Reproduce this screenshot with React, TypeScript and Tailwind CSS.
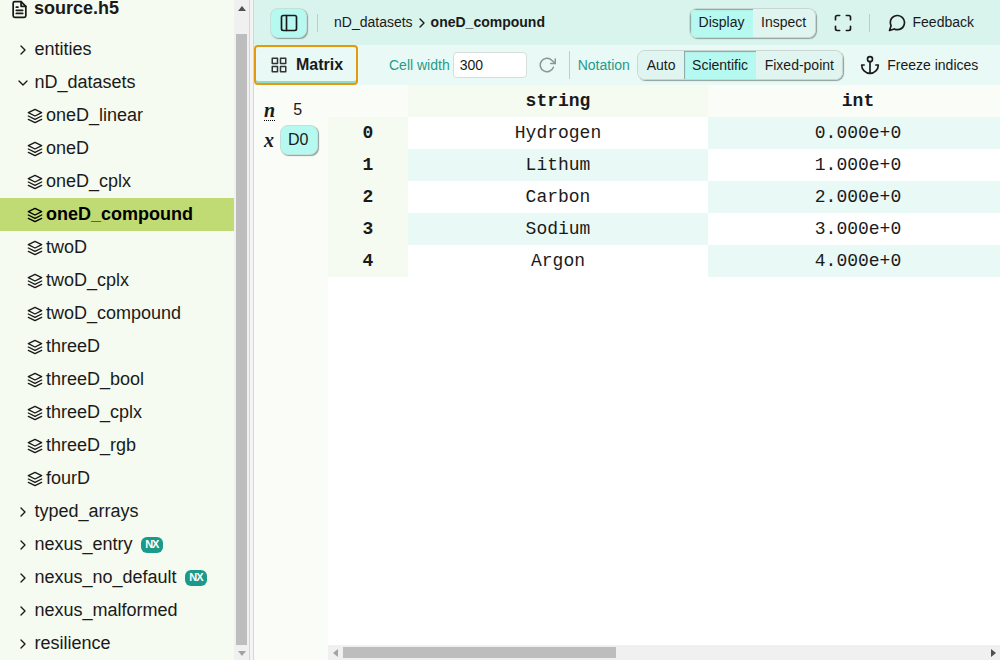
import { FiAnchor, FiChevronDown, FiChevronRight, FiFileText, FiGrid, FiLayers, FiMaximize, FiMessageCircle, FiRotateCw, FiSidebar } from "react-icons/fi";

const topGroups = ["typed_arrays", "nexus_entry", "nexus_no_default", "nexus_malformed", "resilience"];
const nxGroups = ["nexus_entry", "nexus_no_default"];
const datasets = ["oneD_linear", "oneD", "oneD_cplx", "oneD_compound", "twoD", "twoD_cplx", "twoD_compound", "threeD", "threeD_bool", "threeD_cplx", "threeD_rgb", "fourD"];
const rows = [
  { name: "Hydrogen", value: "0.000e+0" },
  { name: "Lithum", value: "1.000e+0" },
  { name: "Carbon", value: "2.000e+0" },
  { name: "Sodium", value: "3.000e+0" },
  { name: "Argon", value: "4.000e+0" },
];

const Arrow = ({ dir, className }: { dir: "up" | "down" | "left" | "right"; className: string }) => {
  const points = { up: "4,1 8,6 0,6", down: "0,2 8,2 4,7", left: "6,0 6,8 1,4", right: "2,0 2,8 7,4" };
  return (
    <svg width="8" height="8" viewBox="0 0 8 8" className={className}>
      <polygon points={points[dir]} fill="currentColor" />
    </svg>
  );
};

const GroupRow = ({ label, open }: { label: string; open?: boolean }) => (
  <div className="h-[33px] flex items-center pl-[15px] text-[18px] text-[#1a1a1a]">
    {open ? <FiChevronDown size={16} strokeWidth={2} /> : <FiChevronRight size={16} strokeWidth={2} />}
    <span className="ml-[3.5px]">{label}</span>
    {nxGroups.includes(label) && (
      <span className="ml-[8.5px] w-[21.5px] h-[16px] rounded-[6px] bg-[#1b9a8a] text-white text-[11px] font-bold tracking-[-1px] flex items-center justify-center leading-none">NX</span>
    )}
  </div>
);

const DatasetRow = ({ label }: { label: string }) => {
  const selected = label === "oneD_compound";
  return (
    <div className={`h-[33px] flex items-center pl-[27px] text-[18px] text-[#1a1a1a] ${selected ? "bg-[#c1db74] font-bold text-black" : ""}`}>
      <FiLayers size={16} strokeWidth={2} />
      <span className="ml-[3px]">{label}</span>
    </div>
  );
};

const Sidebar = () => (
  <div className="w-[249px] shrink-0 flex h-full">
    <div className="w-[234px] bg-[#f5fbf0] overflow-hidden">
      <div className="-mt-[16px] h-[49px] flex items-center pl-[10px]">
        <FiFileText size={19} strokeWidth={2.2} className="mt-[2px] text-[#1a1a1a]" />
        <span className="ml-[5px] text-[18px] font-bold text-[#1a1a1a]">source.h5</span>
      </div>
      <GroupRow label="entities" />
      <GroupRow label="nD_datasets" open />
      {datasets.map((d) => (
        <DatasetRow key={d} label={d} />
      ))}
      {topGroups.map((g) => (
        <GroupRow key={g} label={g} />
      ))}
    </div>
    <div className="w-[15px] bg-[#f0f0f0] flex flex-col items-center">
      <div className="h-[17px] flex items-center justify-center shrink-0">
        <Arrow dir="up" className="text-[#505050]" />
      </div>
      <div className="h-[17px] shrink-0" />
      <div className="w-[11px] flex-1 bg-[#bdbdbd]" />
      <div className="h-[15px] flex items-center justify-center shrink-0">
        <Arrow dir="down" className="text-[#a3a3a3]" />
      </div>
    </div>
  </div>
);

const Toggle = ({ items, active }: { items: string[]; active: string }) => (
  <div className="flex shrink-0 h-[30px] rounded-[8px] border border-[#c9d6d2] shadow-[1px_1px_1px_#8fa09c] overflow-hidden text-[14px] text-[#1a1a1a]">
    {items.map((item) => (
      <div
        key={item}
        className={`flex items-center px-[8.3px] ${item === active ? "bg-[#b5f9f0] shadow-[inset_1px_1px_1px_#8aa5a0]" : "bg-[#e1f5f0]"}`}
      >
        {item}
      </div>
    ))}
  </div>
);

const Header = () => (
  <div className="h-[45px] shrink-0 bg-[#d9f3ed] flex items-center pl-[16px] pr-[26px] text-[14px] text-[#1a1a1a]">
    <div className="w-[37px] h-[30px] rounded-[8px] bg-[#b5f9f0] border border-[#c3e0da] shadow-[1px_1px_1px_#8fa09c] flex items-center justify-center">
      <FiSidebar size={20} strokeWidth={2} />
    </div>
    <div className="w-px h-[18px] bg-[#b9cfca] ml-[10px]" />
    <span className="ml-[16px]">nD_datasets</span>
    <FiChevronRight size={16} strokeWidth={2} className="mx-[1px]" />
    <span className="font-bold">oneD_compound</span>
    <div className="flex-1" />
    <Toggle items={["Display", "Inspect"]} active="Display" />
    <FiMaximize size={20} strokeWidth={2} className="ml-[17px]" />
    <div className="w-px h-[18px] bg-[#b9cfca] ml-[16px]" />
    <FiMessageCircle size={20} strokeWidth={2} className="ml-[17px]" />
    <span className="ml-[6px]">Feedback</span>
  </div>
);

const Toolbar = () => (
  <div className="h-[40px] shrink-0 bg-[#e9f9f5] flex items-center text-[14px] text-[#1a1a1a] whitespace-nowrap">
    <div className="w-[104px] shrink-0 h-[40px] rounded-[4px] border-2 border-[#e59a0c] bg-[#e9f9f5] shadow-[inset_0_-2px_0_#8fdcc8] flex items-center pl-[14px] text-[16px] font-bold">
      <FiGrid size={18} strokeWidth={2} className="text-[#333]" />
      <span className="ml-[8px]">Matrix</span>
    </div>
    <span className="ml-[31px] text-[#1e9c8c]">Cell width</span>
    <div className="ml-[3px] w-[74px] shrink-0 h-[26px] rounded-[4px] bg-white border border-[#d5dedb] flex items-center px-[6px]">300</div>
    <FiRotateCw size={18} strokeWidth={2} className="ml-[11px] shrink-0 text-[#8a9794]" />
    <div className="w-px shrink-0 h-[28px] bg-[#bccfca] ml-[13px]" />
    <span className="ml-[8px] text-[#1e9c8c]">Notation</span>
    <div className="ml-[7.5px]">
      <Toggle items={["Auto", "Scientific", "Fixed-point"]} active="Scientific" />
    </div>
    <FiAnchor size={20} strokeWidth={2} className="ml-[17px] shrink-0" />
    <span className="ml-[7px]">Freeze indices</span>
  </div>
);

const DimPanel = () => (
  <div className="w-[74px] shrink-0 bg-[#fafcf7] pl-[10px] text-[#1a1a1a]">
    <div className="h-[36px] flex items-center pt-[14px]">
      <span className="font-['Liberation_Serif',serif] italic font-bold text-[20px] leading-[20px] border-b border-dotted border-black">n</span>
      <span className="ml-[18px] text-[16px]">5</span>
    </div>
    <div className="mt-[4px] flex items-center">
      <span className="font-['Liberation_Serif',serif] italic font-bold text-[20px]">x</span>
      <div className="ml-[6px] w-[38px] h-[30px] rounded-[8px] bg-[#b5f9f0] border border-[#c3e0da] shadow-[1px_1px_1px_#8fa09c] flex items-center pl-[7px] text-[16px]">D0</div>
    </div>
  </div>
);

const MatrixTable = () => (
  <div className="flex-1 min-w-0 flex flex-col bg-white">
    <div className="flex-1 min-h-0 overflow-hidden font-['Liberation_Mono',monospace] text-[18px] text-[#1a1a1a]">
      <div className="grid grid-cols-[80px_300px_300px] auto-rows-[32px] w-[680px]">
        <div className="bg-[#fafcf7]" />
        <div className="bg-[#f5fbf0] font-bold flex items-center justify-center">string</div>
        <div className="bg-[#fafcf7] font-bold flex items-center justify-center">int</div>
        {rows.map((row, i) => (
          <div key={row.name} className="contents">
            <div className="bg-[#f5fbf0] font-bold flex items-center justify-center">{i}</div>
            <div className={`flex items-center justify-center ${i % 2 === 0 ? "bg-white" : "bg-[#e9f9f5]"}`}>{row.name}</div>
            <div className={`flex items-center justify-center ${i % 2 === 0 ? "bg-[#e9f9f5]" : "bg-white"}`}>{row.value}</div>
          </div>
        ))}
      </div>
    </div>
    <div className="h-[15px] shrink-0 bg-[#f0f0f0] flex items-center">
      <div className="w-[15px] flex items-center justify-center">
        <Arrow dir="left" className="text-[#a3a3a3]" />
      </div>
      <div className="w-[273px] h-[11px] bg-[#bdbdbd]" />
      <div className="flex-1" />
      <div className="w-[15px] flex items-center justify-center">
        <Arrow dir="right" className="text-[#505050]" />
      </div>
    </div>
  </div>
);

export default function App() {
  return (
    <div className="w-[1000px] h-[660px] flex overflow-hidden bg-white font-['Liberation_Sans',Arial,sans-serif]">
      <Sidebar />
      <div className="w-[5px] shrink-0 bg-[#f4f4f4] border-x border-[#d6d6d6]" />
      <div className="flex-1 min-w-0 flex flex-col">
        <Header />
        <Toolbar />
        <div className="flex-1 min-h-0 flex">
          <DimPanel />
          <MatrixTable />
        </div>
      </div>
    </div>
  );
}
